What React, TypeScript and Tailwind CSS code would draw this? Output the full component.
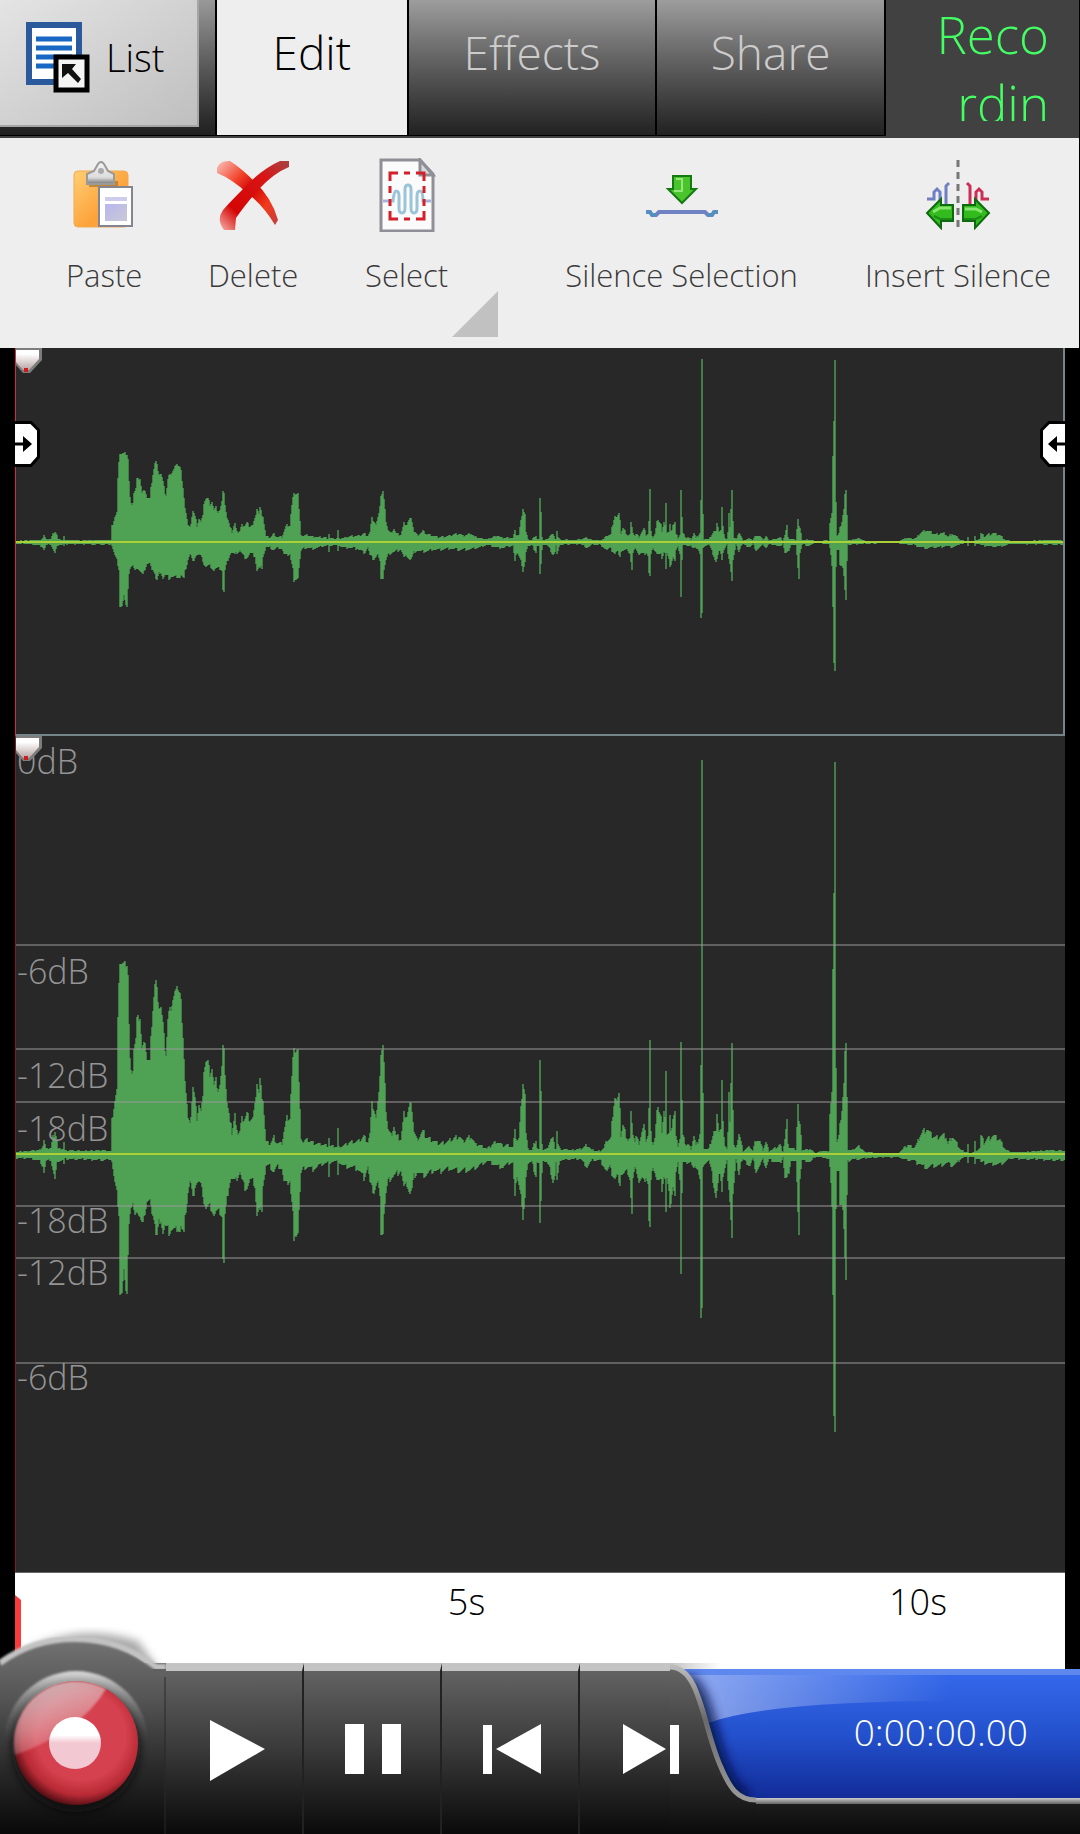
import React from 'react';

// Waveform envelope: [x, peak above centre, peak below centre], full scale = 420
const ENVELOPE = [
  [0, 2, 4], [12, 3, 4], [25, 4, 7], [28, 8, 12], [29, 14, 18], [31, 5, 7], [36, 6, 6], [38, 16, 16], [40, 24, 26], [42, 14, 10],
  [43, 5, 7], [48, 5, 6], [49, 12, 11], [50, 4, 5], [68, 3, 5], [88, 4, 6], [96, 3, 5], [97, 33, 8], [100, 53, 30], [102, 63, 40],
  [103, 135, 50], [104, 175, 60], [105, 193, 140], [107, 191, 140], [109, 190, 118], [110, 190, 130], [112, 190, 138], [113, 180, 100], [114, 130, 70],
  [115, 95, 60], [116, 81, 55], [118, 85, 52], [119, 106, 60], [121, 115, 57], [122, 135, 57], [125, 137, 65], [127, 105, 71],
  [129, 110, 60], [130, 114, 60], [132, 95, 48], [135, 92, 48], [136, 115, 55], [138, 145, 60], [140, 170, 70], [141, 173, 82],
  [142, 165, 83], [144, 147, 68], [146, 147, 66], [148, 130, 80], [150, 106, 72], [151, 100, 74], [153, 135, 75], [154, 142, 80],
  [156, 147, 76], [158, 155, 76], [160, 162, 76], [163, 167, 75], [165, 162, 78], [166, 155, 72], [167, 130, 76], [169, 98, 81],
  [170, 75, 65], [172, 50, 48], [173, 35, 38], [175, 28, 28], [176, 40, 30], [178, 68, 45], [180, 55, 32], [182, 36, 28],
  [184, 50, 28], [186, 42, 32], [188, 55, 40], [189, 85, 48], [191, 93, 55], [193, 93, 52], [195, 80, 52], [197, 86, 56],
  [199, 68, 62], [201, 74, 58], [203, 64, 58], [205, 68, 58], [207, 85, 62], [208, 112, 105], [209, 108, 110], [210, 80, 62],
  [212, 50, 45], [214, 38, 32], [216, 32, 24], [217, 19, 25], [220, 38, 28], [223, 20, 22], [225, 22, 18], [227, 35, 26],
  [230, 35, 34], [232, 40, 34], [235, 34, 26], [238, 36, 27], [240, 48, 32], [242, 72, 62], [244, 60, 55], [245, 74, 58],
  [247, 58, 55], [248, 55, 30], [250, 25, 20], [251, 12, 12], [255, 10, 12], [259, 16, 18], [262, 11, 12], [267, 10, 14],
  [269, 22, 28], [272, 36, 30], [275, 36, 26], [276, 60, 40], [278, 95, 58], [279, 103, 90], [281, 104, 80], [283, 105, 78],
  [284, 70, 55], [285, 42, 38], [286, 18, 20], [288, 12, 15], [293, 14, 13], [298, 11, 15], [303, 10, 12], [310, 9, 9],
  [313, 8, 8], [314, 17, 26], [315, 8, 8], [322, 7, 7], [323, 24, 24], [324, 7, 8], [329, 8, 12], [336, 12, 13], [343, 12, 15],
  [349, 17, 24], [353, 12, 12], [355, 20, 30], [357, 50, 34], [359, 45, 38], [361, 35, 32], [363, 50, 28], [365, 80, 45],
  [366, 100, 78], [368, 108, 79], [369, 90, 60], [371, 45, 40], [373, 25, 28], [376, 18, 24], [379, 28, 22], [381, 18, 20],
  [386, 14, 16], [388, 30, 28], [389, 40, 34], [392, 38, 30], [395, 50, 40], [397, 45, 35], [399, 22, 22], [402, 14, 18],
  [408, 22, 22], [412, 16, 20], [419, 13, 16], [424, 10, 18], [433, 12, 14], [444, 18, 17], [448, 12, 16], [456, 18, 16],
  [460, 10, 14], [467, 8, 10], [472, 5, 7], [482, 13, 12], [488, 8, 13], [493, 9, 10], [498, 7, 8], [500, 22, 44], [502, 14, 20],
  [504, 15, 30], [506, 45, 40], [508, 72, 68], [510, 60, 48], [511, 20, 20], [513, 5, 9], [517, 4, 8], [521, 15, 22],
  [522, 6, 8], [524, 5, 9], [525, 92, 71], [526, 60, 50], [527, 12, 22], [528, 4, 6], [532, 5, 8], [536, 15, 18], [538, 15, 28],
  [540, 6, 22], [541, 6, 8], [542, 23, 28], [543, 10, 22], [545, 5, 6], [556, 4, 5], [566, 5, 5], [572, 9, 13], [577, 4, 6],
  [585, 3, 6], [589, 6, 12], [592, 14, 18], [596, 15, 12], [597, 30, 20], [599, 50, 24], [600, 57, 26], [602, 52, 22],
  [604, 58, 26], [605, 49, 30], [606, 18, 20], [608, 28, 20], [610, 22, 19], [613, 14, 18], [615, 15, 25], [616, 41, 44],
  [617, 28, 61], [618, 22, 25], [620, 12, 15], [621, 17, 13], [624, 11, 28], [627, 22, 25], [629, 28, 28], [631, 14, 22],
  [633, 18, 30], [634, 45, 68], [635, 113, 75], [636, 20, 28], [638, 10, 12], [640, 16, 18], [642, 42, 26], [644, 45, 28],
  [646, 38, 28], [647, 20, 35], [649, 40, 22], [650, 40, 25], [651, 85, 59], [652, 20, 25], [654, 20, 40], [655, 37, 51],
  [656, 20, 48], [658, 37, 32], [660, 42, 43], [661, 16, 20], [663, 8, 10], [665, 16, 24], [666, 112, 119], [667, 53, 39],
  [668, 17, 8], [671, 9, 9], [673, 10, 8], [676, 5, 8], [679, 18, 17], [681, 8, 12], [683, 12, 15], [685, 20, 26],
  [686, 89, 166], [687, 394, 157], [688, 58, 15], [689, 6, 9], [694, 5, 6], [696, 12, 15], [699, 22, 32], [701, 20, 44],
  [702, 43, 38], [704, 23, 22], [706, 24, 24], [707, 72, 36], [708, 30, 22], [710, 9, 14], [712, 5, 6], [713, 20, 30],
  [714, 59, 40], [715, 35, 45], [717, 112, 83], [718, 44, 40], [719, 8, 30], [721, 5, 6], [724, 20, 19], [726, 12, 8],
  [728, 3, 5], [735, 7, 12], [738, 3, 4], [741, 15, 17], [745, 12, 11], [748, 4, 5], [751, 12, 13], [754, 3, 5], [761, 6, 8],
  [765, 9, 10], [768, 2, 3], [770, 15, 25], [772, 33, 25], [773, 8, 22], [776, 6, 6], [781, 5, 8], [783, 50, 55], [784, 32, 79],
  [785, 28, 24], [787, 4, 6], [795, 5, 8], [800, 1, 3], [807, 3, 3], [814, 3, 5], [815, 40, 15], [817, 60, 50], [818, 183, 140],
  [819, 265, 262], [820, 396, 279], [821, 87, 56], [822, 12, 18], [824, 17, 20], [825, 28, 48], [827, 45, 50], [828, 58, 55],
  [829, 70, 75], [830, 102, 105], [831, 109, 128], [832, 60, 44], [833, 5, 7], [837, 4, 5], [844, 8, 5], [850, 2, 4],
  [869, 1, 3], [883, 1, 3], [893, 9, 6], [899, 6, 6], [902, 10, 9], [905, 18, 10], [908, 22, 12], [912, 25, 14], [916, 19, 12],
  [921, 16, 12], [926, 18, 11], [931, 17, 9], [933, 10, 9], [937, 18, 12], [942, 10, 9], [945, 5, 5], [950, 2, 3], [952, 2, 3],
  [953, 9, 8], [954, 1, 3], [959, 2, 3], [960, 12, 12], [961, 3, 4], [965, 6, 5], [966, 18, 8], [969, 11, 9], [973, 15, 9],
  [978, 18, 10], [985, 14, 10], [990, 5, 8], [995, 2, 4], [1007, 2, 5], [1024, 3, 5], [1035, 4, 6], [1050, 3, 6],
];

const WAVE_WIDTH = 1050;

const columns: number[][] = [];
for (let i = 0; i < ENVELOPE.length - 1; i++) {
  const [x0, u0, d0] = ENVELOPE[i];
  const [x1, u1, d1] = ENVELOPE[i + 1];
  for (let x = x0; x < x1; x++) {
    const t = (x - x0) / (x1 - x0);
    const up = u0 + (u1 - u0) * t;
    const down = d0 + (d1 - d0) * t;
    // small ripple so that long runs don't look ruled
    const ripple = ((x * 7919) % 13) / 13 - 0.4;
    const dip = ((x * 5081) % 17) / 17 - 0.5;
    columns.push([up + ripple * Math.min(up * 0.4, 7), down + dip * Math.min(down * 0.4, 7)]);
  }
}

const buildPath = (pick: (...v: number[]) => number) => {
  let top = '';
  let bottom = '';
  columns.forEach((c, x) => {
    const next = columns[x + 1] || c;
    const up = (420 - pick(c[0], next[0])).toFixed(1);
    const down = (420 + pick(c[1], next[1])).toFixed(1);
    top += `L${x} ${up}H${x + 1}`;
    bottom = `L${x + 1} ${down}H${x}` + bottom;
  });
  return `M0 420${top}${bottom}Z`;
};

const OUTER = buildPath(Math.max);
const INNER = buildPath(Math.min);

const LEVELS = [
  { label: '0dB', top: 0, labelClass: 'pt-0.5' },
  { label: '-6dB', top: 25, labelClass: 'pt-0.5' },
  { label: '-12dB', top: 37.5, labelClass: 'pt-0.5' },
  { label: '-18dB', top: 43.75, labelClass: 'pt-0.5' },
  { label: '-18dB', top: 56.25, labelClass: '-mt-2.5' },
  { label: '-12dB', top: 62.5, labelClass: '-mt-2.5' },
  { label: '-6dB', top: 75, labelClass: '-mt-2.5' },
];

const Waveform = () => (
  <svg
    viewBox={`0 0 ${WAVE_WIDTH} 840`}
    preserveAspectRatio="none"
    className="absolute inset-0 w-full h-full"
    shapeRendering="crispEdges"
  >
    <path d={OUTER} fill="#437d47" />
    <path d={INNER} fill="#4fa254" />
  </svg>
);

const CentreLine = () => <div className="absolute inset-x-0 top-1/2 h-0.5 -mt-px bg-[#a9d034]" />;

const PositionMarker = () => (
  <svg className="absolute left-0 top-0" width="28" height="26" viewBox="0 0 28 26">
    <defs>
      <linearGradient id="marker" x1="0" y1="0" x2="0" y2="1">
        <stop offset="0.2" stopColor="#fff" />
        <stop offset="1" stopColor="#b9a3a3" />
      </linearGradient>
    </defs>
    <path d="M0 0H27V12L15 25H8L0 16Z" fill="#7d7d7d" />
    <path d="M0 2H24V11L14 22H8L0 13Z" fill="url(#marker)" />
    <rect x="9" y="20" width="4" height="4" fill="#c81e1e" />
  </svg>
);

const Handle = ({ className }: { className: string }) => (
  <svg className={className} width="25" height="46" viewBox="0 0 25 46">
    <path d="M-4 1.500H16L23.500 9V36L16 44.500H-4Z" fill="#fff" stroke="#000" strokeWidth="3" />
    <path d="M0 23H10" stroke="#000" strokeWidth="3" />
    <path d="M8 15L17 23L8 31Z" fill="#000" />
  </svg>
);

const ListIcon = () => (
  <svg width="64" height="72" viewBox="0 0 64 72">
    <rect x="3" y="3" width="50" height="57" fill="#fff" stroke="#2a5a9c" strokeWidth="6" />
    <path d="M10 17H46M10 26H46M10 35H46M10 44H30" stroke="#1767c3" strokeWidth="5" />
    <rect x="30" y="35" width="31" height="33" fill="#f4f4f4" stroke="#000" strokeWidth="5" />
    <path d="M36 42H50L46 47L55 57L52 61L42 51L36 56Z" fill="#111" />
  </svg>
);

const PasteIcon = () => (
  <svg width="72" height="72" viewBox="0 0 72 72">
    <defs>
      <linearGradient id="board" x1="0" y1="0" x2="1" y2="1">
        <stop offset="0" stopColor="#ffcf74" />
        <stop offset="0.6" stopColor="#fda33c" />
      </linearGradient>
      <linearGradient id="clip" x1="0" y1="0" x2="0" y2="1">
        <stop offset="0" stopColor="#f4f4f4" />
        <stop offset="0.7" stopColor="#dcdcdc" />
        <stop offset="1" stopColor="#777" />
      </linearGradient>
      <linearGradient id="sheet" x1="0" y1="0" x2="1" y2="1">
        <stop offset="0" stopColor="#b9b6ee" />
        <stop offset="1" stopColor="#c9c9d6" />
      </linearGradient>
    </defs>
    <rect x="6" y="13" width="54" height="56" rx="4" fill="url(#board)" stroke="#f3a94e" strokeWidth="1" />
    <path d="M21 23H50V29H21Z" fill="#9a6a2a" opacity="0.6" />
    <path d="M19 16L26 13L30 6Q33 2 36 6L40 13L46 16V26H19Z" fill="url(#clip)" stroke="#9a9a9a" strokeWidth="2" />
    <circle cx="33" cy="13" r="3" fill="#aaa" />
    <rect x="31" y="29" width="33" height="39" fill="#fff" stroke="#85858f" strokeWidth="2" />
    <path d="M37 41H59" stroke="#cfcdee" strokeWidth="4" />
    <rect x="37" y="46" width="22" height="17" fill="url(#sheet)" />
  </svg>
);

const DeleteIcon = () => (
  <svg width="72" height="72" viewBox="0 0 72 72">
    <defs>
      <linearGradient id="strokeA" x1="0" y1="0" x2="1" y2="1">
        <stop offset="0" stopColor="#f9c4bd" />
        <stop offset="0.3" stopColor="#f2452c" />
        <stop offset="0.5" stopColor="#cf0404" />
        <stop offset="0.75" stopColor="#f23a1c" />
        <stop offset="1" stopColor="#c04040" />
      </linearGradient>
      <linearGradient id="strokeB" x1="1" y1="0" x2="0" y2="1">
        <stop offset="0" stopColor="#a84444" />
        <stop offset="0.3" stopColor="#d81414" />
        <stop offset="0.75" stopColor="#d40505" />
        <stop offset="1" stopColor="#f5b3aa" />
      </linearGradient>
    </defs>
    <path d="M0 10Q3 2 13 3Q24 10 37 23Q55 40 61 62L58 67Q46 47 30 35Q15 21 0 15Z" fill="url(#strokeA)" />
    <path d="M72 3V9Q57 15 42 31Q27 48 19 60L18 72H7Q-1 62 6 52Q14 43 28 29Q45 11 63 3Z" fill="url(#strokeB)" />
  </svg>
);

const SelectIcon = () => (
  <svg width="72" height="74" viewBox="0 0 72 74">
    <path d="M10 2H49L62 16V73H10Z" fill="#fbfbfb" stroke="#8f8f97" strokeWidth="3" />
    <path d="M49 2V17H62Z" fill="#d9d9dc" stroke="#8f8f97" strokeWidth="3" />
    <path d="M12 43H22Q23 33 25 33Q28 33 28 38V50Q28 55 31 55Q34 55 34 50V31Q34 27 37 27Q40 27 40 31V50Q40 55 43 55Q46 55 46 50V38Q46 33 49 33Q52 33 52 43H60" fill="none" stroke="#9cc4d8" strokeWidth="3" />
    <path d="M12 43H20M54 43H60" stroke="#a9b0e0" strokeWidth="2" />
    <path
      d="M19 23V15H27M33 15H39M45 15H53V23M19 28V35M53 28V35M19 41V48M53 41V48M19 53V61H27M33 61H39M45 61H53V53"
      fill="none"
      stroke="#d3202a"
      strokeWidth="3"
    />
  </svg>
);

const SilenceIcon = () => (
  <svg width="72" height="72" viewBox="0 0 72 72">
    <path d="M27 18H45V31H50L36 45L22 31H27Z" fill="#4ac42c" stroke="#157a12" strokeWidth="2" />
    <path d="M30 21H36V33H28" fill="none" stroke="#93e67a" strokeWidth="2" />
    <path d="M0 54H4L6 57H10L13 54H59L62 57H66L68 54H72" fill="none" stroke="#6f83c4" strokeWidth="4" />
    <path d="M0 54H4L6 57H10M62 57H66L68 54H72" fill="none" stroke="#4d93c0" strokeWidth="3" />
  </svg>
);

const InsertIcon = () => (
  <svg width="72" height="72" viewBox="0 0 72 72">
    <path d="M36 2V72" stroke="#777" strokeWidth="3" strokeDasharray="7 5" />
    <path d="M5 41H12V34L15 31L18 34V44M24 48V28L27 25" fill="none" stroke="#6f7fc2" strokeWidth="3" />
    <path d="M67 41H60V34L57 31L54 34V44M48 48V28L45 25" fill="none" stroke="#cc2f55" strokeWidth="3" />
    <path d="M31 47V63H19V70L5 55L19 41V47Z" fill="#33bb1e" stroke="#0d6a10" strokeWidth="2" />
    <path d="M41 47V63H53V70L67 55L53 41V47Z" fill="#33bb1e" stroke="#0d6a10" strokeWidth="2" />
    <path d="M11 54L18 50H29M43 51H54L60 54" fill="none" stroke="#86e56c" strokeWidth="3" />
    <path d="M12 58L18 61H30M42 61H54L60 58" fill="none" stroke="#1b8a16" strokeWidth="2" />
  </svg>
);

const tools = [
  { name: 'Paste', icon: <PasteIcon /> },
  { name: 'Delete', icon: <DeleteIcon /> },
  { name: 'Select', icon: <SelectIcon />, menu: true },
  { name: 'Silence Selection', icon: <SilenceIcon /> },
  { name: 'Insert Silence', icon: <InsertIcon /> },
];

const transport = [
  { name: 'Play', icon: <path d="M44 25L99 54L44 86Z" /> },
  { name: 'Pause', icon: <path d="M41 29H60V79H41ZM78 29H97V79H78Z" /> },
  { name: 'Previous', icon: <path d="M41 30H50V79H41ZM99 29V79L54 54Z" /> },
];

const Header = () => (
  <header className="flex h-[138px] bg-[#414141] border-r border-black">
    <div className="w-[215px] shrink-0 h-[136px] pr-4 pb-2 bg-linear-to-b from-[#999] to-[#202020] border-b border-black">
      <button className="flex items-center gap-4 w-full h-full pl-6.5 pb-2.5 bg-linear-to-br from-[#e4e4e4] to-[#bfbfbf] border-r-2 border-b-2 border-[#a5a5a5] text-[38px] text-black">
        <ListIcon />
        List
      </button>
    </div>
    <nav className="flex grow h-[136px] bg-black gap-0.5 px-0.5 pb-px text-[46px] text-[#ccc]">
      <button className="grow-190 basis-0 bg-[#eee] text-black pb-7.5">Edit</button>
      <button className="grow-247 basis-0 bg-linear-to-b from-[#9d9d9d] to-[#222] pb-7.5">Effects</button>
      <button className="grow-227 basis-0 bg-linear-to-b from-[#9d9d9d] to-[#222] pb-7.5">Share</button>
    </nav>
    <div className="w-[193px] shrink-0 h-[121px] pl-12 pr-7.5 overflow-hidden break-all text-right text-[51px] leading-[69px] text-[#43ff64]">
      Recording
    </div>
  </header>
);

const Toolbar = () => (
  <div className="grid grid-cols-[175fr_124fr_184fr_368fr_184fr] h-[210px] pl-[17px] pr-7 bg-[#eee] border-r border-black">
    {tools.map((tool) => (
      <button key={tool.name} className="relative flex flex-col items-center pt-5 text-[31px] leading-10 text-[#3a3a3a] whitespace-nowrap">
        <span className="h-[78px]">{tool.icon}</span>
        <span className="pt-[19px]">{tool.name}</span>
        {tool.menu && (
          <svg className="absolute right-0 bottom-[11px]" width="46" height="46" viewBox="0 0 46 46">
            <path d="M46 0V46H0Z" fill="#c1c1c1" />
          </svg>
        )}
      </button>
    ))}
  </div>
);

const Overview = () => (
  <section className="relative grow-388 basis-0 overflow-hidden bg-[#282828]">
    <Waveform />
    <CentreLine />
    <div className="absolute inset-0 border-r-2 border-b-2 border-[#76848a]" />
    <PositionMarker />
    <div className="absolute inset-y-0 left-0 w-px bg-[#d03030]" />
    <Handle className="absolute left-0 top-[73px]" />
    <Handle className="absolute right-0 top-[73px] -scale-x-100" />
  </section>
);

const Editor = () => (
  <section className="relative grow-837 basis-0 overflow-hidden bg-[#282828] border-b border-[#666] text-[34px] leading-[46px] text-[#949494]">
    <Waveform />
    {LEVELS.map((level) => (
      <div
        key={level.top}
        className={level.top ? 'absolute inset-x-0 -mt-px border-t-2 border-[#9a9a9a]/50' : 'absolute inset-x-0'}
        style={{ top: `${level.top}%` }}
      >
        <div className={`pl-0.5 ${level.labelClass}`}>{level.label}</div>
      </div>
    ))}
    <CentreLine />
    <PositionMarker />
    <div className="absolute inset-y-0 left-0 w-px bg-[#8e1818]" />
  </section>
);

const Timeline = () => (
  <div className="relative h-[96px] bg-white text-[36px] leading-[58px] text-black">
    <svg className="absolute left-0 top-[22px]" width="6" height="74" viewBox="0 0 6 74">
      <path d="M0 0L6 5V74H0Z" fill="#fb3b3b" />
    </svg>
    <span className="absolute left-[43%] -translate-x-1/2">5s</span>
    <span className="absolute left-[86%] -translate-x-1/2">10s</span>
  </div>
);

const RecordButton = () => (
  <button aria-label="Record" className="relative z-10 w-[166px] shrink-0 -mt-9">
    <svg width="166" height="207" viewBox="0 0 166 207" className="block">
      <defs>
        <linearGradient id="dome" x1="0" y1="0" x2="0" y2="1">
          <stop offset="0" stopColor="#727272" />
          <stop offset="0.3" stopColor="#555" />
          <stop offset="0.65" stopColor="#2b2b2b" />
          <stop offset="1" stopColor="#090909" />
        </linearGradient>
        <linearGradient id="halo" x1="0" y1="0" x2="0" y2="1">
          <stop offset="0" stopColor="#d8d8d8" />
          <stop offset="0.5" stopColor="#555" stopOpacity="0" />
        </linearGradient>
        <radialGradient id="ball" cx="0.54" cy="0.44" r="0.6">
          <stop offset="0.6" stopColor="#d5414e" />
          <stop offset="0.8" stopColor="#b82a35" />
          <stop offset="1" stopColor="#300408" />
        </radialGradient>
        <linearGradient id="gloss" x1="0.2" y1="0" x2="0.6" y2="0.9">
          <stop offset="0" stopColor="#ccc" stopOpacity="0.85" />
          <stop offset="1" stopColor="#fff" stopOpacity="0.1" />
        </linearGradient>
        <linearGradient id="dot" x1="0" y1="0" x2="0" y2="1">
          <stop offset="0.35" stopColor="#fff" />
          <stop offset="0.5" stopColor="#f2c8d2" />
        </linearGradient>
        <filter id="soft" x="-20%" y="-20%" width="140%" height="140%">
          <feGaussianBlur stdDeviation="4" />
        </filter>
        <filter id="edge" x="-5%" y="-5%" width="110%" height="110%">
          <feGaussianBlur stdDeviation="1" />
        </filter>
      </defs>
      <path d="M24 25Q75 -6 138 14L158 42H24Z" fill="#555" opacity="0.5" filter="url(#soft)" />
      <path d="M0 36Q32 12 75 12Q120 12 156 45H166V207H0Z" fill="url(#dome)" />
      <path d="M0 36Q32 12 75 12Q120 12 156 40H166" fill="none" stroke="#c2c2c2" strokeWidth="6" filter="url(#edge)" />
      <path d="M165 50V207" stroke="#2a2a2a" />
      <circle cx="76" cy="116" r="72" fill="url(#halo)" filter="url(#edge)" />
      <circle cx="76" cy="121" r="64" fill="#0a0a0a" opacity="0.7" filter="url(#soft)" />
      <circle cx="76" cy="116" r="62" fill="url(#ball)" />
      <path d="M15 128A62 62 0 0 1 106 62Q80 105 15 128Z" fill="url(#gloss)" filter="url(#edge)" />
      <circle cx="75" cy="116" r="26" fill="url(#dot)" />
    </svg>
  </button>
);

const Footer = () => (
  <footer className="relative -mt-1.5 flex h-[171px] bg-linear-to-b from-[#676767] via-[#3a3a3a] to-[#0b0b0b]">
    <RecordButton />
    {transport.map((item) => (
      <button
        key={item.name}
        aria-label={item.name}
        className="w-[138px] shrink-0 border-t-8 border-t-[#c4c4c4] border-r-2 border-r-[#222]"
      >
        <svg width="136" height="163" viewBox="0 -24 136 163" fill="#fff">
          {item.icon}
        </svg>
      </button>
    ))}
    <button aria-label="Next" className="relative z-20 w-[90px] shrink-0 border-t-8 border-[#c4c4c4]">
      <svg width="90" height="163" viewBox="0 -24 90 163" fill="#fff" className="overflow-visible">
        <path d="M43 29V79L86 54ZM90 30H99V79H90Z" />
      </svg>
    </button>
    <svg width="86" height="171" viewBox="0 0 86 171" className="relative z-10 shrink-0">
      <defs>
        <linearGradient id="panel" gradientUnits="userSpaceOnUse" x1="0" y1="0" x2="0" y2="171">
          <stop offset="0" stopColor="#676767" />
          <stop offset="0.5" stopColor="#3a3a3a" />
          <stop offset="1" stopColor="#0b0b0b" />
        </linearGradient>
        <linearGradient id="rim" x1="0" y1="0" x2="0" y2="1">
          <stop offset="0" stopColor="#bbb" />
          <stop offset="0.4" stopColor="#6a6a6a" />
          <stop offset="1" stopColor="#999" />
        </linearGradient>
        <linearGradient id="fade">
          <stop offset="0" stopColor="#c4c4c4" />
          <stop offset="0.6" stopColor="#c4c4c4" stopOpacity="0" />
        </linearGradient>
        <clipPath id="screen">
          <path d="M0 6C34 6 34 60 52 102C62 124 68 135 86 138V6Z" />
        </clipPath>
        <filter id="blur" x="-30%" y="-30%" width="160%" height="160%">
          <feGaussianBlur stdDeviation="6" />
        </filter>
      </defs>
      <path d="M0 0H86V6H0Z" fill="url(#fade)" />
      <g clipPath="url(#screen)">
        <path d="M14 16C34 26 36 60 50 100C60 124 64 130 76 134" fill="none" stroke="#061040" strokeWidth="14" opacity="0.9" filter="url(#blur)" />
      </g>
      <path d="M0 6C30 6 32 60 50 102C60 126 68 138 86 138V171H0Z" fill="url(#panel)" />
      <path d="M0 4C30 4 32 60 50 102C60 126 68 137 86 137" fill="none" stroke="url(#rim)" strokeWidth="5" />
    </svg>
    <div className="grow flex flex-col -ml-[86px]">
      <div className="h-1.5 bg-white border-r-[15px] border-black" />
      <output className="relative flex items-center justify-end h-[129px] pr-13 bg-linear-to-b from-[#3468ea] via-[#2350cc] to-[#122c98] border-t-6 border-[#5e88ee] text-[37px] text-white">
        <svg className="absolute left-0 top-0" width="280" height="52" viewBox="0 0 280 52">
          <defs>
            <linearGradient id="glare">
              <stop offset="0.15" stopColor="#b4c4f4" stopOpacity="0.65" />
              <stop offset="1" stopColor="#a8bdf5" stopOpacity="0" />
            </linearGradient>
          </defs>
          <path d="M0 0H280V26Q100 26 38 48L0 52Z" fill="url(#glare)" />
        </svg>
        <span className="pb-2.5">0:00:00.00</span>
      </output>
      <div className="h-1.5 bg-linear-to-b from-[#ccc] to-[#666]" />
      <div className="grow bg-linear-to-b from-[#1c1c1c] to-[#0b0b0b]" />
    </div>
  </footer>
);

const App = () => {
  return (
    <div className="min-h-screen flex flex-col bg-black font-['Open_Sans','Noto_Sans',sans-serif] font-light">
      <Header />
      <Toolbar />
      <main className="grow flex flex-col mx-[15px]">
        <Overview />
        <Editor />
        <Timeline />
      </main>
      <Footer />
    </div>
  );
};

export default App;
